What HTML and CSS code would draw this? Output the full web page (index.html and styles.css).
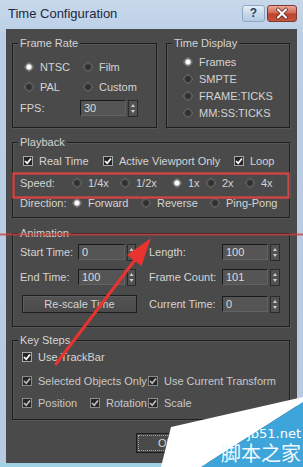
FILE: index.html
```html
<!DOCTYPE html>
<html>
<head>
<meta charset="utf-8">
<link rel="stylesheet" href="styles.css">
</head>
<body>
<div class="window">
  <div class="titlebar">
    <span class="title">Time Configuration</span>
    <div class="tb-btns">
      <span class="tb-help">?</span>
      <span class="tb-close"><svg width="28" height="15" viewBox="0 0 28 15"><path d="M10 3.5 L18 11.5 M18 3.5 L10 11.5" stroke="#5a1c14" stroke-width="3.6" stroke-linecap="round"/><path d="M10 3.5 L18 11.5 M18 3.5 L10 11.5" stroke="#fff" stroke-width="2.2" stroke-linecap="round"/></svg></span>
    </div>
  </div>

  <div class="client">
    <div class="row-top">
      <div class="group g-framerate">
        <div class="gtitle">Frame Rate</div>
        <div class="fr-body">
          <div class="fr-grid">
            <span class="opt"><span class="radio on"></span>NTSC</span>
            <span class="opt"><span class="radio"></span>Film</span>
            <span class="opt"><span class="radio"></span>PAL</span>
            <span class="opt"><span class="radio"></span>Custom</span>
          </div>
          <div class="fps-row">
            <span class="fps-label">FPS:</span>
            <span class="spinner"><span class="field f-fps">30</span><svg class="arrows" width="10" height="17" viewBox="0 0 10 17"><rect x="0.5" y="0.5" width="9" height="16" fill="#525252" stroke="#2a2a2a"/><polygon points="3,7 5,4 7,7" fill="#d0d0d0"/><polygon points="3,10 5,13 7,10" fill="#d0d0d0"/></svg></span>
          </div>
        </div>
      </div>
      <div class="group g-timedisp">
        <div class="gtitle">Time Display</div>
        <div class="td-body">
          <div class="td-row opt"><span class="radio on"></span>Frames</div>
          <div class="td-row opt"><span class="radio"></span>SMPTE</div>
          <div class="td-row opt"><span class="radio"></span>FRAME:TICKS</div>
          <div class="td-row opt"><span class="radio"></span>MM:SS:TICKS</div>
        </div>
      </div>
    </div>

    <div class="group g-playback">
      <div class="gtitle">Playback</div>
      <div class="pb-body">
        <div class="cb-row">
          <span class="opt w80"><span class="cb"><svg width="8" height="8" viewBox="0 0 8 8"><path d="M1 4 L3.2 6.3 L7 1.5" stroke="#fff" stroke-width="1.7" fill="none"/></svg></span>Real Time</span>
          <span class="opt w131"><span class="cb"><svg width="8" height="8" viewBox="0 0 8 8"><path d="M1 4 L3.2 6.3 L7 1.5" stroke="#fff" stroke-width="1.7" fill="none"/></svg></span>Active Viewport Only</span>
          <span class="opt"><span class="cb"><svg width="8" height="8" viewBox="0 0 8 8"><path d="M1 4 L3.2 6.3 L7 1.5" stroke="#fff" stroke-width="1.7" fill="none"/></svg></span>Loop</span>
        </div>
        <div class="speed-row">
          <span class="rlabel">Speed:</span>
          <span class="opt w48"><span class="radio"></span>1/4x</span>
          <span class="opt w52"><span class="radio"></span>1/2x</span>
          <span class="opt w34"><span class="radio on"></span>1x</span>
          <span class="opt w39"><span class="radio"></span>2x</span>
          <span class="opt"><span class="radio"></span>4x</span>
        </div>
        <div class="dir-row">
          <span class="rlabel">Direction:</span>
          <span class="opt w69"><span class="radio on"></span>Forward</span>
          <span class="opt w69"><span class="radio"></span>Reverse</span>
          <span class="opt"><span class="radio"></span>Ping-Pong</span>
        </div>
      </div>
    </div>

    <div class="group g-anim">
      <div class="gtitle">Animation</div>
      <div class="an-body">
        <div class="an-row">
          <span class="lab1">Start Time:</span>
          <span class="spinner"><span class="field f47">0</span><svg class="arrows" width="9" height="17" viewBox="0 0 9 17"><rect x="0.5" y="0.5" width="8" height="16" fill="#525252" stroke="#2a2a2a"/><polygon points="2.5,7 4.5,4 6.5,7" fill="#d0d0d0"/><polygon points="2.5,10 4.5,13 6.5,10" fill="#d0d0d0"/></svg></span>
          <span class="lab2">Length:</span>
          <span class="spinner"><span class="field f46">100</span><svg class="arrows" width="10" height="17" viewBox="0 0 10 17"><rect x="0.5" y="0.5" width="9" height="16" fill="#525252" stroke="#2a2a2a"/><polygon points="3,7 5,4 7,7" fill="#d0d0d0"/><polygon points="3,10 5,13 7,10" fill="#d0d0d0"/></svg></span>
        </div>
        <div class="an-row r2">
          <span class="lab1">End Time:</span>
          <span class="spinner"><span class="field f47">100</span><svg class="arrows" width="9" height="17" viewBox="0 0 9 17"><rect x="0.5" y="0.5" width="8" height="16" fill="#525252" stroke="#2a2a2a"/><polygon points="2.5,7 4.5,4 6.5,7" fill="#d0d0d0"/><polygon points="2.5,10 4.5,13 6.5,10" fill="#d0d0d0"/></svg></span>
          <span class="lab2">Frame Count:</span>
          <span class="spinner"><span class="field f46">101</span><svg class="arrows" width="10" height="17" viewBox="0 0 10 17"><rect x="0.5" y="0.5" width="9" height="16" fill="#525252" stroke="#2a2a2a"/><polygon points="3,7 5,4 7,7" fill="#d0d0d0"/><polygon points="3,10 5,13 7,10" fill="#d0d0d0"/></svg></span>
        </div>
        <div class="an-row r3">
          <span class="btn-rescale">Re-scale Time</span>
          <span class="lab2">Current Time:</span>
          <span class="spinner"><span class="field f46">0</span><svg class="arrows" width="10" height="17" viewBox="0 0 10 17"><rect x="0.5" y="0.5" width="9" height="16" fill="#525252" stroke="#2a2a2a"/><polygon points="3,7 5,4 7,7" fill="#d0d0d0"/><polygon points="3,10 5,13 7,10" fill="#d0d0d0"/></svg></span>
        </div>
      </div>
    </div>

    <div class="group g-keys">
      <div class="gtitle">Key Steps</div>
      <div class="ks-body">
        <div class="ks-row">
          <span class="opt"><span class="cb"><svg width="8" height="8" viewBox="0 0 8 8"><path d="M1 4 L3.2 6.3 L7 1.5" stroke="#fff" stroke-width="1.7" fill="none"/></svg></span>Use TrackBar</span>
        </div>
        <div class="ks-row r2 dim">
          <span class="opt w126"><span class="cb"><svg width="8" height="8" viewBox="0 0 8 8"><path d="M1 4 L3.2 6.3 L7 1.5" stroke="#bbb" stroke-width="1.7" fill="none"/></svg></span>Selected Objects Only</span>
          <span class="opt"><span class="cb"><svg width="8" height="8" viewBox="0 0 8 8"><path d="M1 4 L3.2 6.3 L7 1.5" stroke="#bbb" stroke-width="1.7" fill="none"/></svg></span>Use Current Transform</span>
        </div>
        <div class="ks-row r3 dim">
          <span class="opt w68"><span class="cb"><svg width="8" height="8" viewBox="0 0 8 8"><path d="M1 4 L3.2 6.3 L7 1.5" stroke="#bbb" stroke-width="1.7" fill="none"/></svg></span>Position</span>
          <span class="opt w58"><span class="cb"><svg width="8" height="8" viewBox="0 0 8 8"><path d="M1 4 L3.2 6.3 L7 1.5" stroke="#bbb" stroke-width="1.7" fill="none"/></svg></span>Rotation</span>
          <span class="opt"><span class="cb"><svg width="8" height="8" viewBox="0 0 8 8"><path d="M1 4 L3.2 6.3 L7 1.5" stroke="#bbb" stroke-width="1.7" fill="none"/></svg></span>Scale</span>
        </div>
      </div>
    </div>

    <div class="footer">
      <span class="btn-ok">OK</span>
    </div>
  </div>

  <svg class="overlay" width="303" height="467" viewBox="0 0 303 467">
    <line x1="0" y1="234.5" x2="303" y2="234.5" stroke="rgba(205,60,60,0.75)" stroke-width="2"/>
    <rect x="13.5" y="173.5" width="275" height="24" fill="none" stroke="#cf4444" stroke-width="2.4"/>
    <line x1="56" y1="364" x2="138" y2="256" stroke="#e8332f" stroke-width="3" stroke-linecap="round"/>
    <polygon points="151,238 141.5,266 127,255" fill="#e8332f"/>
    <polygon points="171,427 303,397 303,402 201,467 161,467" fill="#ffffff"/>
    <polygon points="201,467 303,402 303,467" fill="#3ea5da"/>
    <text x="301" y="438" text-anchor="end" class="wm1">jb51.net</text>
    <text x="301" y="461" text-anchor="end" class="wm2">脚本之家</text>
  </svg>
</div>
</body>
</html>
```

FILE: styles.css
```css
* { box-sizing: border-box; }

body {
  margin: 0;
  width: 303px;
  height: 467px;
  overflow: hidden;
  font-family: "Liberation Sans", Arial, sans-serif;
  font-size: 11px;
  color: #d4d4d4;
  background: #bcd0e5;
}

.window {
  position: relative;
  width: 303px;
  height: 467px;
  display: flex;
  flex-direction: column;
  background: linear-gradient(#c8d8eb, #bacee4 40px, #b6cbe2);
  border-bottom: 4px solid #9ed2e4;
}

.titlebar {
  height: 29px;
  flex: none;
  display: flex;
  padding: 5px 6px 0 8px;
}

.title {
  flex: 1;
  font-size: 13px;
  line-height: 15px;
  margin-top: 1px;
  color: #1a2a42;
}

.tb-btns {
  display: flex;
  gap: 2px;
  height: 17px;
}

.tb-help {
  width: 23px;
  height: 17px;
  border: 1px solid #8ea6c2;
  border-radius: 3px;
  background: linear-gradient(#e6eef8, #c9d9ea 50%, #b4c9e0);
  color: #2a3e5c;
  font-weight: bold;
  font-size: 12px;
  line-height: 15px;
  text-align: center;
}

.tb-close {
  width: 30px;
  height: 17px;
  border: 1px solid #7d3a2f;
  border-radius: 3px;
  background: linear-gradient(#eaa896, #d06a55 45%, #bb4230 55%, #c9553e);
  display: flex;
}

.client {
  flex: 1;
  margin: 0 6px;
  background: #4a4a4a;
  padding: 14px 7px 0 6px;
  display: flex;
  flex-direction: column;
}

.group {
  border: 1px solid #1e1e1e;
  box-shadow: 1px 1px 0 rgba(255, 255, 255, 0.07), inset 1px 1px 0 rgba(255, 255, 255, 0.07);
}

.gtitle {
  margin: -7px 0 0 5px;
  padding: 0 2px;
  height: 13px;
  line-height: 13px;
  width: max-content;
  background: #4a4a4a;
}

.opt {
  display: flex;
  align-items: center;
  gap: 6px;
  white-space: nowrap;
}

.radio {
  width: 10px;
  height: 10px;
  flex: none;
  border-radius: 50%;
  background: radial-gradient(circle at 50% 50%, #2f2f2f 0 2px, #4e4e4e 3.5px, #6a6a6a 4.5px, #3a3a3a 5px);
}

.radio.on {
  background: radial-gradient(circle at 50% 50%, #ffffff 0 1.8px, #b0b0b0 2.8px, #5a5a5a 4px, #6a6a6a 4.6px, #3a3a3a 5px);
}

.cb {
  width: 10px;
  height: 10px;
  flex: none;
  border: 1px solid #a8a8a8;
  background: #262626;
  display: flex;
  align-items: center;
  justify-content: center;
}

.dim .cb { border-color: #8a8a8a; }
.dim { color: #c8c8c8; }

.spinner {
  display: flex;
  align-items: center;
  gap: 2px;
}

.field {
  height: 16px;
  line-height: 14px;
  padding-left: 3px;
  background: #555555;
  border-top: 1px solid #1a1a1a;
  border-left: 1px solid #1a1a1a;
  border-right: 1px solid #626262;
  border-bottom: 1px solid #626262;
  color: #dcdcdc;
}

.arrows { display: block; }

.f-fps { width: 46px; }
.f47 { width: 47px; }
.f46 { width: 46px; }

/* top row */
.row-top {
  display: flex;
  gap: 9px;
  height: 85px;
}

.g-framerate { width: 145px; }
.g-timedisp { flex: 1; }

.fr-body { padding: 7px 0 0 7px; }

.fr-grid {
  display: grid;
  grid-template-columns: 59px auto;
  grid-auto-rows: 20px;
  margin-left: 4px;
}

.fps-row {
  display: flex;
  align-items: center;
  height: 22px;
}

.fps-label { width: 60px; }

.td-body { padding: 3px 0 0 16px; }

.td-row { height: 17px; }

/* playback */
.g-playback { margin-top: 14px; }

.pb-body { padding: 2px 0 4px 7px; }

.cb-row {
  display: flex;
  align-items: center;
  height: 20px;
  margin-left: 3px;
}

.speed-row, .dir-row {
  display: flex;
  align-items: center;
  height: 20px;
}

.speed-row { margin-top: 2px; }

.rlabel { width: 52px; }

.w80 { width: 80px; }
.w131 { width: 131px; }
.w48 { width: 48px; }
.w52 { width: 52px; }
.w34 { width: 34px; }
.w39 { width: 39px; }
.w69 { width: 69px; }
.w126 { width: 126px; }
.w68 { width: 68px; }
.w58 { width: 58px; }

/* animation */
.g-anim { margin-top: 15px; }

.an-body { padding: 2px 0 12px 7px; }

.an-row {
  display: flex;
  align-items: center;
  height: 20px;
}

.an-row.r2 { margin-top: 5px; }
.an-row.r3 { margin-top: 7px; }

.lab1 { width: 58px; }

.lab2 {
  width: 73px;
  margin-left: 13px;
}

.btn-rescale {
  width: 115px;
  height: 18px;
  margin-left: 2px;
  line-height: 16px;
  text-align: center;
  border: 1px solid #1e1e1e;
  background: linear-gradient(#545454, #4a4a4a);
  box-shadow: inset 1px 1px 0 #5e5e5e;
}

.r3 .lab2 { margin-left: 12px; }

/* key steps */
.g-keys { margin-top: 13px; }

.ks-body { padding: 0 0 6px 9px; }

.ks-row {
  display: flex;
  align-items: center;
  height: 20px;
}

.ks-row.r2 { margin-top: 4px; }
.ks-row.r3 { margin-top: 2px; }

/* footer */
.footer {
  display: flex;
  margin-top: 13px;
  padding-left: 124px;
}

.btn-ok {
  width: 60px;
  height: 20px;
  line-height: 18px;
  text-align: center;
  border: 1px solid #1c1c1c;
  background: #4a4a4a;
  outline: 1px dotted #a0a0a0;
  outline-offset: -3px;
}

/* annotation + watermark overlay */
.overlay {
  position: absolute;
  left: 0;
  top: 0;
  pointer-events: none;
}

.wm1 {
  font-family: "DejaVu Sans", sans-serif;
  font-size: 13px;
  fill: #ffffff;
}

.wm2 {
  font-family: "Noto Sans CJK SC", sans-serif;
  font-size: 20px;
  fill: #f2f9ff;
}
```
